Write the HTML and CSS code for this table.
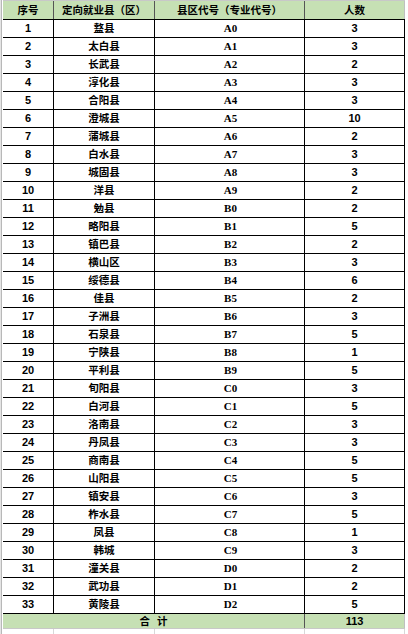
FILE: index.html
```html
<!DOCTYPE html>
<html lang="zh">
<head>
<meta charset="utf-8">
<title>定向就业县</title>
<link rel="stylesheet" href="styles.css">
</head>
<body>
<div class="sheet">
  <div class="table">
    <div class="row head"><div class="c">序号</div><div class="c">定向就业县（区）</div><div class="c">县区代号（专业代号）</div><div class="c">人数</div></div>
    <div class="row"><div class="c n">1</div><div class="c z">盩县</div><div class="c code">A0</div><div class="c n">3</div></div>
    <div class="row"><div class="c n">2</div><div class="c z">太白县</div><div class="c code">A1</div><div class="c n">3</div></div>
    <div class="row"><div class="c n">3</div><div class="c z">长武县</div><div class="c code">A2</div><div class="c n">2</div></div>
    <div class="row"><div class="c n">4</div><div class="c z">淳化县</div><div class="c code">A3</div><div class="c n">3</div></div>
    <div class="row"><div class="c n">5</div><div class="c z">合阳县</div><div class="c code">A4</div><div class="c n">3</div></div>
    <div class="row"><div class="c n">6</div><div class="c z">澄城县</div><div class="c code">A5</div><div class="c n">10</div></div>
    <div class="row"><div class="c n">7</div><div class="c z">蒲城县</div><div class="c code">A6</div><div class="c n">2</div></div>
    <div class="row"><div class="c n">8</div><div class="c z">白水县</div><div class="c code">A7</div><div class="c n">3</div></div>
    <div class="row"><div class="c n">9</div><div class="c z">城固县</div><div class="c code">A8</div><div class="c n">3</div></div>
    <div class="row"><div class="c n">10</div><div class="c z">洋县</div><div class="c code">A9</div><div class="c n">2</div></div>
    <div class="row"><div class="c n">11</div><div class="c z">勉县</div><div class="c code">B0</div><div class="c n">2</div></div>
    <div class="row"><div class="c n">12</div><div class="c z">略阳县</div><div class="c code">B1</div><div class="c n">5</div></div>
    <div class="row"><div class="c n">13</div><div class="c z">镇巴县</div><div class="c code">B2</div><div class="c n">2</div></div>
    <div class="row"><div class="c n">14</div><div class="c z">横山区</div><div class="c code">B3</div><div class="c n">3</div></div>
    <div class="row"><div class="c n">15</div><div class="c z">绥德县</div><div class="c code">B4</div><div class="c n">6</div></div>
    <div class="row"><div class="c n">16</div><div class="c z">佳县</div><div class="c code">B5</div><div class="c n">2</div></div>
    <div class="row"><div class="c n">17</div><div class="c z">子洲县</div><div class="c code">B6</div><div class="c n">3</div></div>
    <div class="row"><div class="c n">18</div><div class="c z">石泉县</div><div class="c code">B7</div><div class="c n">5</div></div>
    <div class="row"><div class="c n">19</div><div class="c z">宁陕县</div><div class="c code">B8</div><div class="c n">1</div></div>
    <div class="row"><div class="c n">20</div><div class="c z">平利县</div><div class="c code">B9</div><div class="c n">5</div></div>
    <div class="row"><div class="c n">21</div><div class="c z">旬阳县</div><div class="c code">C0</div><div class="c n">3</div></div>
    <div class="row"><div class="c n">22</div><div class="c z">白河县</div><div class="c code">C1</div><div class="c n">5</div></div>
    <div class="row"><div class="c n">23</div><div class="c z">洛南县</div><div class="c code">C2</div><div class="c n">3</div></div>
    <div class="row"><div class="c n">24</div><div class="c z">丹凤县</div><div class="c code">C3</div><div class="c n">3</div></div>
    <div class="row"><div class="c n">25</div><div class="c z">商南县</div><div class="c code">C4</div><div class="c n">5</div></div>
    <div class="row"><div class="c n">26</div><div class="c z">山阳县</div><div class="c code">C5</div><div class="c n">5</div></div>
    <div class="row"><div class="c n">27</div><div class="c z">镇安县</div><div class="c code">C6</div><div class="c n">3</div></div>
    <div class="row"><div class="c n">28</div><div class="c z">柞水县</div><div class="c code">C7</div><div class="c n">5</div></div>
    <div class="row"><div class="c n">29</div><div class="c z">凤县</div><div class="c code">C8</div><div class="c n">1</div></div>
    <div class="row"><div class="c n">30</div><div class="c z">韩城</div><div class="c code">C9</div><div class="c n">3</div></div>
    <div class="row"><div class="c n">31</div><div class="c z">潼关县</div><div class="c code">D0</div><div class="c n">2</div></div>
    <div class="row"><div class="c n">32</div><div class="c z">武功县</div><div class="c code">D1</div><div class="c n">2</div></div>
    <div class="row"><div class="c n">33</div><div class="c z">黄陵县</div><div class="c code">D2</div><div class="c n">5</div></div>
    <div class="row total"><div class="c span3">合&nbsp;&nbsp;&nbsp;计</div><div class="c n">113</div></div>
    <div class="row blank"><div class="c"></div><div class="c"></div><div class="c"></div><div class="c"></div></div>
  </div>
</div>
</body>
</html>
```
FILE: styles.css
```css
html, body {
  margin: 0;
  padding: 0;
  background: #ffffff;
}
body {
  font-family: "Noto Sans CJK SC", "Liberation Sans", sans-serif;
  font-weight: bold;
  font-size: 10.5px;
  color: #000;
}
.sheet {
  width: 408px;
  height: 634px;
  overflow: hidden;
  box-sizing: border-box;
  border-left: 1px solid #e4e4e4;
  position: relative;
}
.sheet::before {
  content: "";
  position: absolute;
  left: 0;
  top: 0;
  bottom: 0;
  width: 1px;
  background: #b8b8b8;
}
.table {
  margin-left: 2px;
  width: 402px;
  display: flex;
  flex-direction: column;
}
.row {
  display: grid;
  grid-template-columns: 51px 101px 150px 100px;
  height: 18px;
  box-sizing: border-box;
  border-bottom: 1px solid #000;
}
.c {
  display: flex;
  align-items: center;
  justify-content: center;
  border-right: 1px solid #000;
  line-height: 1;
  white-space: nowrap;
  overflow: hidden;
}
.row.head {
  height: 20px;
  background: #c6e0b4;
  border-top: 1px solid #c8c8c8;
}
.row.head .c {
  border-right-color: #555;
}
.row.head .c:last-child {
  border-right-color: #c0c0c0;
}
.n {
  font-family: "Liberation Sans", Arial, sans-serif;
  font-size: 11px;
}
.code {
  font-family: "Liberation Serif", serif;
  font-weight: bold;
  font-size: 11px;
  padding-left: 2px;
}
.row.total {
  height: 15px;
  background: #c6e0b4;
  border-bottom: 1px solid #c8c8c8;
  grid-template-columns: 302px 100px;
}
.row.total .c {
  border-right-color: #555;
}
.row.total .c:last-child {
  border-right-color: #c0c0c0;
}
.row.blank {
  height: 10px;
  border-bottom: none;
}
.row.blank .c {
  border-right-color: #d8d8d8;
}
```
